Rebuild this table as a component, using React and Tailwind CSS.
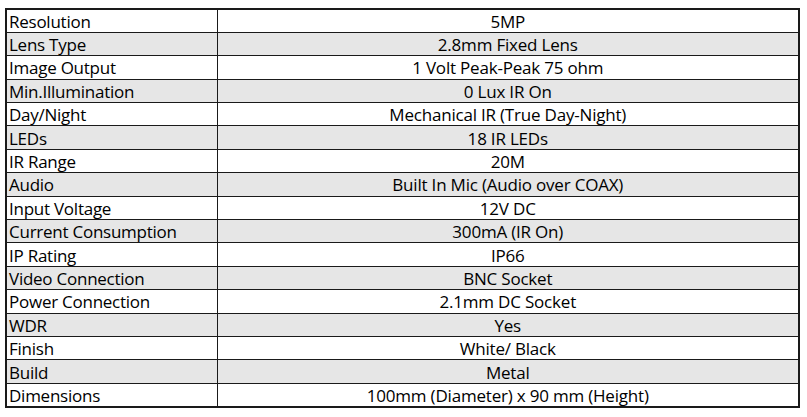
const rows = [
  ["Resolution", "5MP"],
  ["Lens Type", "2.8mm Fixed Lens"],
  ["Image Output", "1 Volt Peak-Peak 75 ohm"],
  ["Min.Illumination", "0 Lux IR On"],
  ["Day/Night", "Mechanical IR (True Day-Night)"],
  ["LEDs", "18 IR LEDs"],
  ["IR Range", "20M"],
  ["Audio", "Built In Mic (Audio over COAX)"],
  ["Input Voltage", "12V DC"],
  ["Current Consumption", "300mA (IR On)"],
  ["IP Rating", "IP66"],
  ["Video Connection", "BNC Socket"],
  ["Power Connection", "2.1mm DC Socket"],
  ["WDR", "Yes"],
  ["Finish", "White/ Black"],
  ["Build", "Metal"],
  ["Dimensions", "100mm (Diameter) x 90 mm (Height)"],
];

export default function App() {
  return (
    <div className="w-[807px] h-[417px] bg-white pt-[8px] pl-[5px]" style={{ fontFamily: "'Open Sans', Lato, sans-serif" }}>
      <table className="border-collapse border-2 border-[#1a1a1a] text-[17px] leading-none text-black w-[795px]">
        <tbody>
          {rows.map(([k, v], i) => (
            <tr key={k} className={`h-[23.4px] ${i % 2 === 1 ? "bg-[#e6e6e6]" : "bg-white"}`}>
              <td className="w-[211px] border-[1.5px] border-[#1a1a1a] pl-[2px] pt-[1px] pb-0 align-middle tracking-[-0.25px]">{k}</td>
              <td className="border-[1.5px] border-[#1a1a1a] text-center pt-[1px] pb-0 align-middle tracking-[-0.2px]">{v}</td>
            </tr>
          ))}
        </tbody>
      </table>
    </div>
  );
}
